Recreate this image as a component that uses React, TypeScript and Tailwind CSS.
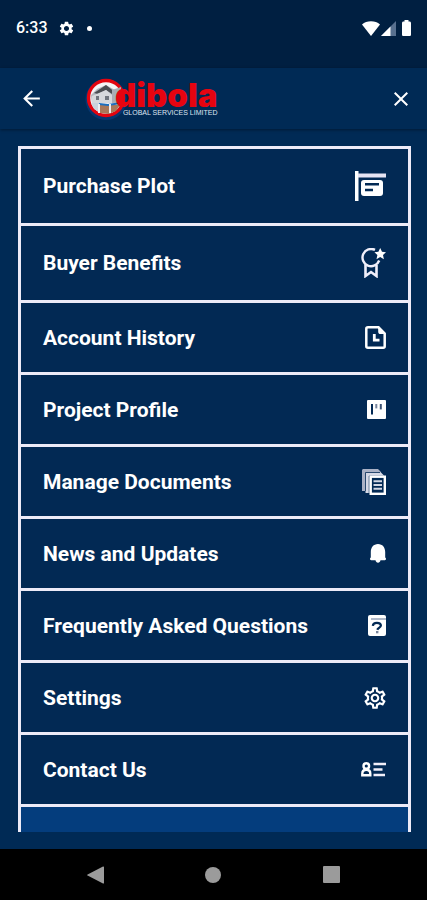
import type { ReactNode } from 'react'
import { MdArrowBack, MdClose, MdOutlineSettings, MdSettings } from 'react-icons/md'

interface MenuItem {
  label: string
  icon: ReactNode
  tall?: boolean
}

function PlotSignIcon() {
  return (
    <svg width="31" height="30" viewBox="0 0 31 30" fill="none" aria-hidden="true">
      <path d="M0 0h3.5v30H0z" fill="#fff" />
      <path d="M3 2.5h28v4H3z" fill="#e6e4f4" />
      <rect x="6" y="9" width="22" height="16" rx="3" fill="#fff" />
      <path d="M10 13.3h14M10 19h8" stroke="#022954" strokeWidth="2.4" />
    </svg>
  )
}

function AwardIcon() {
  return (
    <svg width="25" height="30" viewBox="0 0 25 30" fill="none" aria-hidden="true">
      <path d="M14 1.9A8.6 8.6 0 1 0 18.2 12.5" stroke="#f1effa" strokeWidth="2.4" />
      <path d="M4.5 17v11l5.5-4 5.5 4V17" stroke="#f1effa" strokeWidth="2.6" />
      <path
        d="M19.2 0l1.8 3.7 4 .5-3 2.8.9 4.2-3.7-2.1-3.7 2.1.9-4.2-3-2.8 4-.5z"
        fill="#fff"
      />
    </svg>
  )
}

function FileClockIcon() {
  return (
    <svg width="21" height="23" viewBox="0 0 21 23" fill="none" aria-hidden="true">
      <path
        d="M3 1.3h10.5l6.2 6.2v12.7c0 .9-.6 1.5-1.5 1.5H3c-1 0-1.7-.6-1.7-1.5V2.8c0-.9.7-1.5 1.7-1.5z"
        stroke="#fff"
        strokeWidth="2.5"
      />
      <path d="M13.2 1l7 7h-4.7c-1.4 0-2.3-.9-2.3-2.3z" fill="#fff" />
      <path d="M9.3 8v6.2h5.2" stroke="#fff" strokeWidth="2.8" />
    </svg>
  )
}

function BoardIcon() {
  return (
    <svg width="19" height="19" viewBox="0 0 19 19" aria-hidden="true">
      <rect width="19" height="19" rx="1" fill="#fff" />
      <path d="M4 4h2v10.5H4z" fill="#022954" />
      <path d="M8.3 4h2v4.4h-2z" fill="#77849c" />
      <path d="M12.8 4h2v5.4h-2z" fill="#3c5273" />
    </svg>
  )
}

function DocumentsIcon() {
  return (
    <svg width="24" height="26" viewBox="0 0 24 26" fill="none" aria-hidden="true">
      <path d="M0 1.5C0 .6.6 0 1.5 0H16l3 3v2H5v17H0z" fill="#aab1c5" />
      <path d="M3.5 3.5H19l3 3V9H8v15H3.5z" fill="#d6d9e6" />
      <path d="M3.5 22V3.5H18M7.2 24V7H22" stroke="#022954" strokeWidth=".8" />
      <rect x="8.7" y="7.7" width="14.1" height="17.1" fill="#022954" stroke="#fff" strokeWidth="2.4" />
      <path d="M11.5 12.2h8.5M11.5 16h8.5M11.5 19.8h8.5" stroke="#d3d7e4" strokeWidth="2" />
    </svg>
  )
}

function BellIcon() {
  return (
    <svg width="16" height="19" viewBox="0 0 16 19" fill="#fff" aria-hidden="true">
      <path d="M8 0c4.5 0 7.2 3.6 7.2 8v5.6c.5.3.8.8.8 1.4 0 .7-.5 1.2-1.2 1.2H1.2C.5 16.2 0 15.7 0 15c0-.6.3-1.1.8-1.4V8C.8 3.6 3.5 0 8 0z" />
      <path d="M5.5 16h5c-.3 1.7-1.2 2.7-2.5 2.7s-2.2-1-2.5-2.7z" />
    </svg>
  )
}

function FaqIcon() {
  return (
    <svg width="18" height="21" viewBox="0 0 18 21" fill="none" aria-hidden="true">
      <rect width="18" height="21" rx="2" fill="#fff" />
      <path d="M3 4h15" stroke="#8f9bb2" strokeWidth="1.4" />
      <path
        d="M4.8 10.8c.2-2 1.7-3 4.1-3 2.5 0 4 1 4 2.7 0 2-2.6 2-3.7 4.3"
        stroke="#022954"
        strokeWidth="2.2"
      />
      <path d="M8 16h2.4v2.3H8z" fill="#77849c" />
    </svg>
  )
}

function ContactIcon() {
  return (
    <svg width="25" height="15" viewBox="0 0 25 15" fill="none" aria-hidden="true">
      <circle cx="5.3" cy="4" r="2.8" stroke="#fff" strokeWidth="2.4" />
      <path
        d="M1.3 13.3v-1.6c0-2.4 1.5-3.9 4-3.9s4 1.5 4 3.9v1.6z"
        stroke="#fff"
        strokeWidth="2.4"
      />
      <path d="M12.5 2H25M12.5 7.5h9M12.5 13H24" stroke="#f1effa" strokeWidth="2.6" />
    </svg>
  )
}

const menuItems: MenuItem[] = [
  { label: 'Purchase Plot', icon: <PlotSignIcon />, tall: true },
  { label: 'Buyer Benefits', icon: <AwardIcon />, tall: true },
  { label: 'Account History', icon: <FileClockIcon /> },
  { label: 'Project Profile', icon: <BoardIcon /> },
  { label: 'Manage Documents', icon: <DocumentsIcon /> },
  { label: 'News and Updates', icon: <BellIcon /> },
  { label: 'Frequently Asked Questions', icon: <FaqIcon /> },
  { label: 'Settings', icon: <MdOutlineSettings size={26} className="-mr-0.5" /> },
  { label: 'Contact Us', icon: <ContactIcon /> },
]

function StatusBar() {
  return (
    <div className="flex h-[68px] shrink-0 items-center justify-between bg-[#001f41] px-4 pb-3">
      <div className="flex items-center">
        <span className="text-base leading-5 font-medium">6:33</span>
        <MdSettings size={17} className="ml-2.5" />
        <span className="ml-3 size-[5px] rounded-full bg-white" />
      </div>
      <div className="flex items-center">
        <svg width="18" height="15" viewBox="0 0 18 15" fill="#fff" aria-hidden="true">
          <path d="M9 15L0 3.6C2.4 1.4 5.5.3 9 .3s6.6 1.1 9 3.3z" />
        </svg>
        <svg width="15" height="15" viewBox="0 0 15 15" className="ml-px" aria-hidden="true">
          <path d="M15 0v15H0z" fill="#58708f" />
          <path d="M9.5 5.5V15H0z" fill="#fff" />
        </svg>
        <svg width="9" height="16" viewBox="0 0 9 16" fill="#fff" className="ml-1.5" aria-hidden="true">
          <path d="M2.5 0h4v1.4h1c.9 0 1.5.6 1.5 1.5v11.5c0 .9-.6 1.6-1.5 1.6h-6C.6 16 0 15.3 0 14.4V2.9c0-.9.6-1.5 1.5-1.5h1z" />
        </svg>
      </div>
    </div>
  )
}

function Logo() {
  return (
    <div className="flex items-center">
      <svg width="42" height="46" viewBox="0 0 42 46" fill="none" aria-hidden="true">
        <circle cx="21" cy="23.5" r="20.5" fill="#0a3c7e" opacity=".7" />
        <circle cx="21" cy="22" r="17.5" fill="#f4f4f6" stroke="#e3040f" strokeWidth="3.4" />
        <path d="M6 19l6-6 9-4 9 5 5 5v8H7z" fill="#b3b6bd" />
        <path d="M9 17l12-8 10 8-4 1-6-4-8 4z" fill="#4a4d52" />
        <path d="M7 20l7-3 7-3 6 5v8H7z" fill="#d6d8dc" />
        <path d="M11 20h3v4h-3zM20 20h4v4h-4z" fill="#70757e" />
        <path d="M27 14l9-3v14l-9 2z" fill="#a9adb5" />
        <path d="M6 27h8v9l-5-3z" fill="#c9d2dc" />
        <path d="M14 29h21l-4 6-7 3-9-1z" fill="#a9785a" />
        <path d="M14 28l9 1 13-2" stroke="#1c6fc0" strokeWidth="2.2" />
        <path d="M14 28v9M25 28v9" stroke="#eceef2" strokeWidth="2" />
      </svg>
      <div className="-ml-3 flex flex-col items-end">
        <span className="font-['Inter',sans-serif] text-[33px] leading-7 font-black text-[#e60410]">
          dibola
        </span>
        <span className="font-['Liberation_Sans',Arial,sans-serif] text-[7px] leading-[7px] text-[#dfe5f2]">
          GLOBAL SERVICES LIMITED
        </span>
      </div>
    </div>
  )
}

function Header() {
  return (
    <header className="flex h-[61px] shrink-0 items-center bg-[#002a55] pr-3.5 pl-[19px] shadow-[0_1px_3px_rgba(0,0,0,0.4)]">
      <button type="button" aria-label="Back">
        <MdArrowBack size={25} />
      </button>
      <div className="ml-[41px]">
        <Logo />
      </div>
      <button type="button" aria-label="Close" className="ml-auto">
        <MdClose size={24} />
      </button>
    </header>
  )
}

function MenuRow({ label, icon, tall }: MenuItem) {
  return (
    <li className="border-b-[3px] border-[#edebf8]">
      <button
        type="button"
        className={`flex w-full items-center justify-between bg-[#022954] px-[22px] text-left ${
          tall ? 'h-[74px]' : 'h-[69px]'
        }`}
      >
        <span className="text-[21px] leading-7 font-bold">{label}</span>
        {icon}
      </button>
    </li>
  )
}

function SystemNav() {
  return (
    <nav className="grid h-[51px] shrink-0 grid-cols-3 place-items-center bg-black px-9">
      <button type="button" aria-label="System back">
        <svg width="17" height="18" viewBox="0 0 17 18" fill="#9b9b9b" aria-hidden="true">
          <path d="M16 .5c.6-.3 1 0 1 .6v15.8c0 .6-.4.9-1 .6L.6 9.6c-.6-.3-.6-.9 0-1.2z" />
        </svg>
      </button>
      <button type="button" aria-label="Home" className="size-4 rounded-full bg-[#9b9b9b]" />
      <button type="button" aria-label="Recent apps" className="size-[17px] rounded-[1px] bg-[#9b9b9b]" />
    </nav>
  )
}

export default function App() {
  return (
    <div className="flex h-dvh flex-col bg-[#002a55] font-['Roboto',sans-serif] text-white">
      <StatusBar />
      <Header />
      <main className="flex min-h-0 flex-1 flex-col py-[17px] pr-4 pl-[18px]">
        <ul className="min-h-0 flex-1 overflow-y-auto border-x-[3px] border-t-[3px] border-[#edebf8] bg-[#043d7d] [scrollbar-width:none]">
          {menuItems.map((item) => (
            <MenuRow key={item.label} {...item} />
          ))}
        </ul>
      </main>
      <SystemNav />
    </div>
  )
}
